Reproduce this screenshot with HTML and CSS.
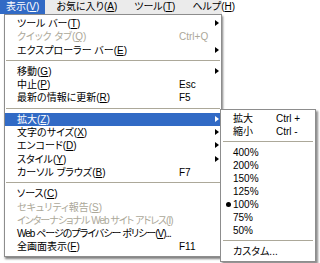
FILE: index.html
```html
<!DOCTYPE html>
<html lang="ja">
<head>
    <meta charset="UTF-8">
    <title>表示メニュー</title>
    <link rel="stylesheet" href="styles.css">
</head>
<body>
    <div class="screen">
      <div class="menubar">
        <span class="top active">表示(<u>V</u>)</span>
        <span class="top">お気に入り(<u>A</u>)</span>
        <span class="top">ツール(<u>T</u>)</span>
        <span class="top">ヘルプ(<u>H</u>)</span>
      </div>

      <div class="menu">
        <div class="item sub"><span class="label">ツール バー(<u>T</u>)</span></div>
        <div class="item off"><span class="label">クイック タブ(<u>Q</u>)</span><span class="key">Ctrl+Q</span></div>
        <div class="item sub"><span class="label">エクスプローラー バー(<u>E</u>)</span></div>
        <div class="sep"></div>
        <div class="item sub"><span class="label">移動(<u>G</u>)</span></div>
        <div class="item"><span class="label">中止(<u>P</u>)</span><span class="key">Esc</span></div>
        <div class="item"><span class="label">最新の情報に更新(<u>R</u>)</span><span class="key">F5</span></div>
        <div class="sep"></div>
        <div class="item sub hot"><span class="label">拡大(<u>Z</u>)</span></div>
        <div class="item sub"><span class="label">文字のサイズ(<u>X</u>)</span></div>
        <div class="item sub"><span class="label">エンコード(<u>D</u>)</span></div>
        <div class="item sub"><span class="label">スタイル(<u>Y</u>)</span></div>
        <div class="item"><span class="label">カーソル ブラウズ(<u>B</u>)</span><span class="key">F7</span></div>
        <div class="sep"></div>
        <div class="item"><span class="label">ソース(<u>C</u>)</span></div>
        <div class="item off"><span class="label">セキュリティ報告(<u>S</u>)</span></div>
        <div class="item off narrow"><span class="label">インターナショナル Web サイト アドレス(<u>I</u>)</span></div>
        <div class="item narrow"><span class="label">Web ページのプライバシー ポリシー(<u>V</u>)...</span></div>
        <div class="item"><span class="label">全画面表示(<u>F</u>)</span><span class="key">F11</span></div>
      </div>

      <!-- submenu of 拡大 -->
      <div class="popup">
        <div class="pitem"><span class="plabel">拡大</span><span>Ctrl +</span></div>
        <div class="pitem"><span class="plabel">縮小</span><span>Ctrl -</span></div>
        <div class="sep"></div>
        <div class="pitem">400%</div>
        <div class="pitem">200%</div>
        <div class="pitem">150%</div>
        <div class="pitem">125%</div>
        <div class="pitem checked">100%</div>
        <div class="pitem">75%</div>
        <div class="pitem">50%</div>
        <div class="sep"></div>
        <div class="pitem">カスタム...</div>
      </div>
    </div>
</body>
</html>
```

FILE: styles.css
```css
/* page base */
body {
  margin: 0;
  background: #fff;
  font-family: "Liberation Sans", "Noto Sans CJK JP", sans-serif;
  font-size: 10px;
  font-feature-settings: "palt";
  color: #000;
}

u {
  text-decoration-thickness: 1px;
  text-underline-offset: 1px;
}

.screen {
  position: relative;
  width: 320px;
  height: 263px;
  overflow: hidden;
}

/* top menu bar */
.menubar {
  display: flex;
  width: 222px;
  height: 14px;
  background: #ebebeb;
}

.top {
  padding: 0 6px;
  line-height: 14px;
  white-space: nowrap;
  margin-right: 5px;
}

.top.active {
  background: #316ac5;
  color: #fff;
}

/* dropdown */
.menu {
  width: 216px;
  margin-left: 4px;
  padding: 2px 0 2px;
  border: 1px solid #8d8d8d;
  background: #fff;
  box-shadow: 1px 2px 2px rgba(0, 0, 0, 0.5);
}

.item {
  position: relative;
  display: flex;
  height: 13.3px;
  line-height: 13px;
  padding-left: 12px;
  white-space: nowrap;
}

.item .label {
  width: 162px;
}

/* long katakana rows sit tighter in the original font */
.item.narrow {
  letter-spacing: -1px;
}

.item.off {
  color: #aca899;
}

.item.hot {
  background: #316ac5;
  color: #fff;
}

/* little black triangle for submenus */
.item.sub::after {
  content: "";
  position: absolute;
  right: 2px;
  top: 3px;
  border-left: 4px solid #000;
  border-top: 3.5px solid transparent;
  border-bottom: 3.5px solid transparent;
}

.item.hot::after {
  border-left-color: #fff;
}

.sep {
  height: 1px;
  margin: 3px 1px 4px;
  background: #aca899;
}

/* 拡大 submenu */
.popup {
  position: absolute;
  left: 220px;
  top: 109px;
  width: 94px;
  padding: 2px 0 3px;
  border: 1px solid #8d8d8d;
  background: #fff;
  box-shadow: 2px 2px 2px rgba(0, 0, 0, 0.45);
}

.pitem {
  position: relative;
  display: flex;
  height: 13px;
  line-height: 13px;
  padding-left: 12px;
  white-space: nowrap;
}

.plabel {
  width: 43px;
}

.pitem.checked::before {
  content: "";
  position: absolute;
  left: 5px;
  top: 4px;
  width: 5px;
  height: 5px;
  border-radius: 50%;
  background: #000;
}

.popup .sep {
  margin: 3px 2px 4px;
}
```
